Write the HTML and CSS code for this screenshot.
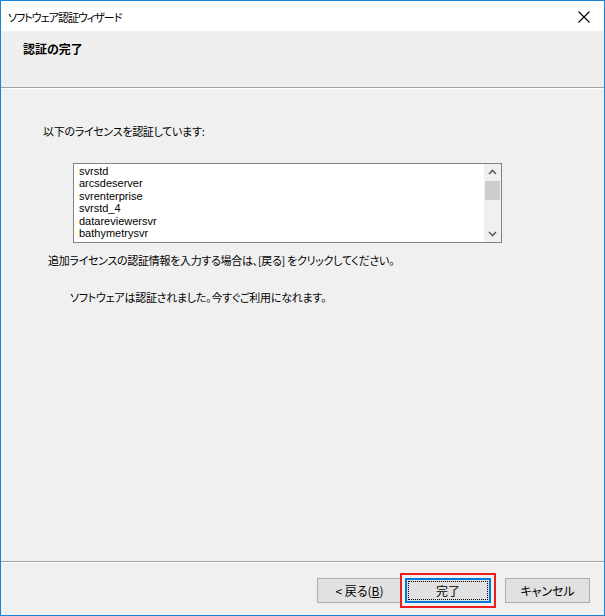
FILE: index.html
```html
<!DOCTYPE html>
<html lang="ja">
<head>
<meta charset="utf-8">
<title>ソフトウェア認証ウィザード</title>
<link rel="stylesheet" href="styles.css">
</head>
<body>
<div class="window">
  <div class="titlebar">
    <span class="title">ソフトウェア認証ウィザード</span>
    <svg class="close" width="12" height="12" viewBox="0 0 12 12"><path d="M0.5 0.5 L11.5 11.5 M11.5 0.5 L0.5 11.5" stroke="#000" stroke-width="1.1" fill="none"/></svg>
  </div>
  <div class="header">
    <div class="header-title">認証の完了</div>
  </div>
  <div class="content">
    <p class="intro">以下のライセンスを認証しています:</p>
    <div class="listbox">
      <ul class="items">
        <li>svrstd</li>
        <li>arcsdeserver</li>
        <li>svrenterprise</li>
        <li>svrstd_4</li>
        <li>datareviewersvr</li>
        <li>bathymetrysvr</li>
      </ul>
      <div class="scrollbar">
        <svg class="arrow" width="17" height="17" viewBox="0 0 17 17"><path d="M5 10 L8.5 6.5 L12 10" stroke="#606060" stroke-width="1.6" fill="none"/></svg>
        <div class="track"><div class="thumb"></div></div>
        <svg class="arrow" width="17" height="17" viewBox="0 0 17 17"><path d="M5 7 L8.5 10.5 L12 7" stroke="#606060" stroke-width="1.6" fill="none"/></svg>
      </div>
    </div>
    <p class="note">追加ライセンスの認証情報を入力する場合は、[戻る] をクリックしてください。</p>
    <p class="done">ソフトウェアは認証されました。今すぐご利用になれます。</p>
  </div>
  <div class="footer">
    <button class="btn">&lt; 戻る(<u>B</u>)</button>
    <span class="highlight">
      <button class="btn btn-default"><span class="focus">完了</span></button>
    </span>
    <button class="btn btn-cancel">キャンセル</button>
  </div>
</div>
</body>
</html>
```
FILE: styles.css
```css
html, body {
  margin: 0;
  padding: 0;
  background: #f0f0f0;
}
body {
  font-family: "Noto Sans CJK JP", "Noto Sans", sans-serif;
  font-size: 11px;
  color: #000;
  font-feature-settings: "palt";
}
.window {
  width: 605px;
  height: 616px;
  box-sizing: border-box;
  border: 1px solid #1883d7;
  display: flex;
  flex-direction: column;
  background: #f0f0f0;
}
.titlebar {
  height: 30px;
  background: #fff;
  display: flex;
  align-items: center;
  justify-content: space-between;
  padding: 1px 14px 0 7px;
  box-sizing: border-box;
}
.title {
  font-size: 11px;
  letter-spacing: -1px;
  line-height: 16px;
}
.close {
  display: block;
}
.header {
  height: 57px;
  background: #efefef;
  border-bottom: 1px solid #a0a0a0;
  box-shadow: 0 1px 0 #fff;
  padding: 10px 0 0 22px;
  box-sizing: border-box;
}
.header-title {
  font-weight: bold;
  font-size: 12px;
  line-height: 16px;
}
.content {
  flex: 1;
  padding-top: 1px;
  border-bottom: 1px solid #a0a0a0;
}
.content p {
  margin: 0;
  line-height: 16px;
}
.intro {
  margin-top: 34px !important;
  padding-left: 42px;
  letter-spacing: -0.3px;
}
.listbox {
  margin: 24px 0 0 72px;
  width: 429px;
  height: 80px;
  box-sizing: border-box;
  border: 1px solid #828282;
  background: #fff;
  display: flex;
}
.items {
  flex: 1;
  list-style: none;
  margin: 0;
  padding: 1px 0 0 5px;
  font-family: "Liberation Sans", Arial, sans-serif;
  font-size: 11px;
  line-height: 12.4px;
}
.scrollbar {
  width: 17px;
  background: #f0f0f0;
  border-left: 1px solid #fff;
  display: flex;
  flex-direction: column;
}
.arrow {
  display: block;
}
.track {
  flex: 1;
  padding: 0 1px;
}
.thumb {
  height: 19px;
  background: #cdcdcd;
}
.note {
  margin-top: 9px !important;
  padding-left: 47px;
  letter-spacing: -0.3px;
}
.done {
  margin-top: 21px !important;
  padding-left: 69px;
  letter-spacing: -0.25px;
}
.footer {
  height: 53px;
  box-sizing: border-box;
  border-top: 1px solid #fff;
  display: flex;
  align-items: flex-start;
  padding: 15px 14px 0 0;
  justify-content: flex-end;
}
.btn {
  width: 85px;
  height: 25px;
  box-sizing: border-box;
  background: #e1e1e1;
  border: 1px solid #adadad;
  font-family: "Noto Sans CJK JP", "Noto Sans", sans-serif;
  font-size: 12px;
  font-feature-settings: "palt";
  color: #000;
  padding: 0;
  margin: 0;
}
.highlight {
  position: relative;
  margin: 0 14px 0 3px;
}
.highlight::after {
  content: "";
  position: absolute;
  left: -5px;
  top: -5px;
  right: -5px;
  bottom: -5px;
  border: 2px solid #ee1c1c;
  pointer-events: none;
}
.btn-default {
  width: 86px;
  border: 2px solid #0078d7;
  padding: 1px;
  display: block;
}
.focus {
  display: flex;
  align-items: center;
  justify-content: center;
  height: 100%;
  border: 1px dotted #000;
  box-sizing: border-box;
}
```
